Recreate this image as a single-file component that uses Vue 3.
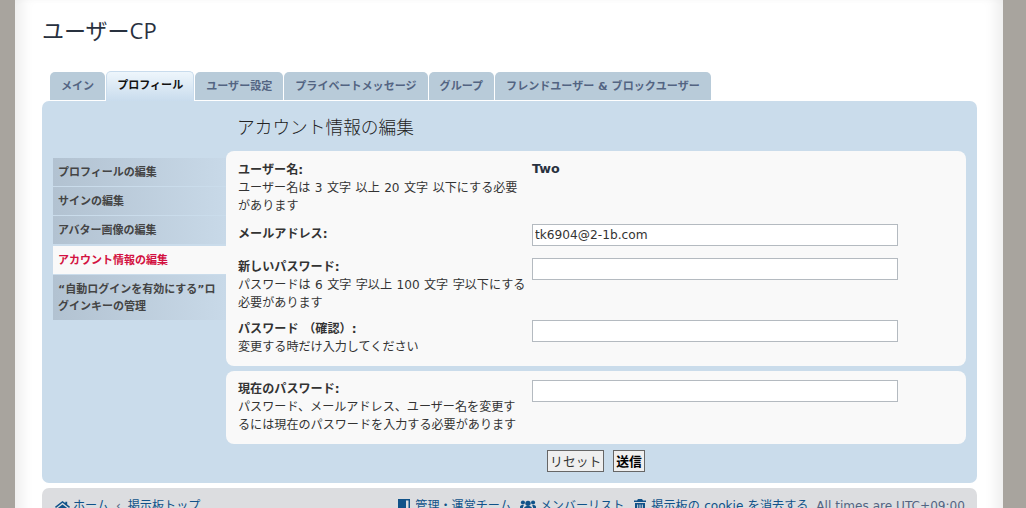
<script setup>
const tabs = [
  { label: 'メイン' },
  { label: 'プロフィール', active: true },
  { label: 'ユーザー設定' },
  { label: 'プライベートメッセージ' },
  { label: 'グループ' },
  { label: 'フレンドユーザー & ブロックユーザー' },
]
const side = [
  { label: 'プロフィールの編集' },
  { label: 'サインの編集' },
  { label: 'アバター画像の編集' },
  { label: 'アカウント情報の編集', active: true },
  { label: '“自動ログインを有効にする”ログインキーの管理' },
]
</script>

<template>
  <div class="page">
    <div class="wrap">
      <h2 class="title">ユーザーCP</h2>
      <ul class="tabs">
        <li v-for="t in tabs" :key="t.label" class="tab" :class="{ on: t.active }">{{ t.label }}</li>
      </ul>
      <div class="panel">
        <div class="side">
          <a v-for="s in side" :key="s.label" class="item" :class="{ on: s.active }">{{ s.label }}</a>
        </div>
        <div class="main">
          <h3 class="head">アカウント情報の編集</h3>
          <div class="card first">
            <div class="row r1">
              <div class="lab"><b>ユーザー名:</b><br>ユーザー名は 3 文字 以上 20 文字 以下にする必要があります</div>
              <div class="val"><b class="two">Two</b></div>
            </div>
            <div class="row r2">
              <div class="lab"><b>メールアドレス:</b></div>
              <div class="val"><input class="inp" value="tk6904@2-1b.com"></div>
            </div>
            <div class="row r3">
              <div class="lab"><b>新しいパスワード:</b><br>パスワードは 6 文字 字以上 100 文字 字以下にする必要があります</div>
              <div class="val"><input class="inp"></div>
            </div>
            <div class="row r4">
              <div class="lab"><b>パスワード （確認）:</b><br>変更する時だけ入力してください</div>
              <div class="val"><input class="inp"></div>
            </div>
          </div>
          <div class="card second">
            <div class="row">
              <div class="lab"><b>現在のパスワード:</b><br>パスワード、メールアドレス、ユーザー名を変更するには現在のパスワードを入力する必要があります</div>
              <div class="val"><input class="inp"></div>
            </div>
          </div>
          <div class="btns">
            <button class="btn">リセット</button>
            <button class="btn strong">送信</button>
          </div>
        </div>
      </div>
      <div class="foot">
        <div class="crumbs">
          <svg class="ic home" viewBox="0 0 16 13"><path d="M8 0 0 6.300l1 1.200L8 2 15 7.500l1-1.200-3-2.400V.8h-2v1.500zM2.500 8V13h4V9.500h3V13h4V8L8 3.700z"/></svg>
          <a>ホーム</a><span class="sep">‹</span><a>掲示板トップ</a>
        </div>
        <div class="links">
          <svg class="ic book" viewBox="0 0 12 14"><path d="M0 0h12v14H0zM8 1.500v11h2.500v-11z"/></svg>
          <a>管理・運営チーム</a>
          <svg class="ic group" viewBox="0 0 18 14"><circle cx="9" cy="4" r="3"/><circle cx="3.300" cy="3" r="2.300"/><circle cx="14.700" cy="3" r="2.300"/><path d="M4.500 14V10c0-2 2-3 4.500-3s4.500 1 4.500 3v4zM0 11V8c0-1.500 1.500-2 3.500-2l1 .8C3.500 7.500 3 9 3 11zM18 11V8c0-1.500-1.500-2-3.500-2l-1 .8c1 .7 1.500 2.200 1.500 4.200z"/></svg>
          <a>メンバーリスト</a>
          <svg class="ic trash" viewBox="0 0 12 14"><path d="M4 0h4l1 1.500h3V3H0V1.500h3zM1 4h10v10H1zm2.200 1.500v7h1v-7zm2.300 0v7h1v-7zm2.300 0v7h1v-7z"/></svg>
          <a class="ck">掲示板の cookie を消去する</a>
          <span class="tz">All times are UTC+09:00</span>
        </div>
      </div>
    </div>
  </div>
</template>

<style>
html, body { margin: 0; height: 508px; overflow: hidden; background: #a8a49e; }
</style>

<style scoped>
.page {
  height: 508px;
  overflow: hidden;
  font-family: "DejaVu Sans", "Noto Sans CJK JP", sans-serif;
  font-size: 12.100px;
  color: #333;
}
.wrap {
  box-sizing: border-box;
  width: 988px;
  height: 560px;
  margin-left: 15px;
  padding: 0 26px 0 27px;
  background: #fff;
  box-shadow: inset 14px 0 14px -8px rgba(0, 0, 0, .08), inset -14px 0 14px -8px rgba(0, 0, 0, .08);
}
.title {
  margin: 0;
  padding-top: 14px;
  height: 58px;
  box-sizing: border-box;
  font: 400 22px/32px "Open Sans", "Noto Sans CJK JP", sans-serif;
  color: #28313f;
}
.tabs {
  list-style: none;
  margin: 0;
  padding: 13px 0 0 8px;
  height: 43px;
  box-sizing: border-box;
  display: flex;
  align-items: flex-end;
  gap: 1px;
}
.tab {
  box-sizing: border-box;
  height: 28px;
  padding: 0 11px;
  margin-bottom: 1px;
  line-height: 29px;
  background: #b8cbd9;
  color: #536482;
  font-weight: 700;
  font-size: 11.050px;
  border-radius: 5px 5px 0 0;
  white-space: nowrap;
}
.tab.on {
  height: 30px;
  margin: 0;
  padding: 0 10px;
  background: linear-gradient(#eef6fc, #c9dced);
  border: 1px solid #c9dced;
  border-bottom: 0;
  color: #111;
  line-height: 28px;
}
.panel {
  display: flex;
  height: 382px;
  box-sizing: border-box;
  background: #cadceb;
  border-radius: 7px;
  padding: 0 11px;
}
.side {
  width: 173px;
  flex: none;
  padding-top: 57px;
  display: flex;
  flex-direction: column;
  gap: 1px;
}
.item {
  box-sizing: border-box;
  padding: 6px 5px 4px;
  height: 28px;
  line-height: 18px;
  font-weight: 700;
  font-size: 11px;
  color: #444;
  background: linear-gradient(to right, #b2c2d1, #c8d9e8);
}
.item.on {
  background: #f9f9f9;
  color: #d31141;
  margin-top: 1px;
}
.item:last-child { height: 45px; line-height: 17px; padding-top: 6px; }
.main { flex: 1; }
.head {
  margin: 0;
  height: 50px;
  box-sizing: border-box;
  padding: 14px 0 0 11px;
  font: 300 17.700px/24px "Open Sans", "Noto Sans CJK JP", sans-serif;
  color: #222;
}
.card {
  background: #f9f9f9;
  border-radius: 8px;
  box-sizing: border-box;
  padding: 0 12px;
}
.first { height: 215px; padding-top: 10px; }
.second { height: 73px; margin-top: 5px; padding-top: 9px; }
.row { display: flex; }
.r1 { height: 63px; }
.r2 { height: 34px; }
.r2 .lab { padding-top: 1px; }
.r3 { height: 62px; }
.lab {
  box-sizing: border-box;
  width: 294px;
  padding-right: 5px;
  flex: none;
  line-height: 18px;
  font-size: 12.100px;
  word-spacing: .6px;
}
.lab b { color: #333; font-weight: 700; }
.val { flex: 1; }
.two { font-size: 12.700px; color: #28313f; line-height: 15px; display: block; }
.inp {
  box-sizing: border-box;
  display: block;
  width: 366px;
  height: 22px;
  border: 1px solid #b4bac0;
  padding: 0 2px;
  background: #fff;
  color: #333;
  font: 12.200px "DejaVu Sans", sans-serif;
  outline: none;
}
.btns {
  display: flex;
  justify-content: center;
  gap: 9px;
  margin-top: 6px;
}
.btn {
  box-sizing: border-box;
  height: 22px;
  padding: 0 2px;
  background: #efefef;
  border: 1px solid #666;
  font: 400 12.800px/18px "Noto Sans CJK JP", sans-serif;
  color: #333;
}
.btn.strong { font-weight: 700; color: #000; }
.foot {
  margin-top: 5px;
  height: 60px;
  background: #dcdde0;
  border-radius: 7px;
  padding: 9px 12px 0 13px;
  display: flex;
  justify-content: space-between;
  line-height: 18px;
  white-space: nowrap;
  color: #536482;
}
.foot a { color: #105289; }
.crumbs, .links { display: flex; align-items: flex-start; }
.sep { margin: 0 7px; color: #536482; }
.ic { height: 14px; fill: #105289; margin-top: 2px; flex: none; }
.home { width: 15px; margin-top: 3px; margin-right: 3px; }
.book { width: 12px; margin-right: 5px; }
.group { width: 16px; margin-right: 4px; }
.trash { width: 12px; margin-right: 5px; }
.links a { margin-right: 8px; }
.links .ck { word-spacing: .6px; }
.links a:nth-of-type(2) { margin-right: 10px; }
.tz { color: #536482; }
</style>
